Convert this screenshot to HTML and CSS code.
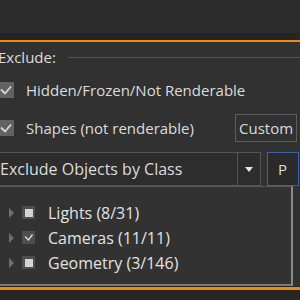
FILE: index.html
```html
<!DOCTYPE html>
<html>

<head>
    <title>Exclude</title>
    <meta charset="UTF-8">
    <link rel="stylesheet" href="styles.css">
</head>

<body>
    <div class="toolbar"></div>
    <div class="toolbar-edge"></div>
    <div class="accent"></div>

    <div class="panel">
        <div class="group-head">
            <span class="group-title">Exclude:</span>
            <span class="group-rule"></span>
        </div>

        <div class="check-row">
            <span class="check-box"><svg width="16" height="16" viewBox="0 0 16 16"><path d="M3 7.5 L7 11.5 L13 4.5" fill="none" stroke="#d6d6d6" stroke-width="1.8"/></svg></span>
            <span class="check-label">Hidden/Frozen/Not Renderable</span>
        </div>

        <div class="check-row second">
            <span class="check-box"><svg width="16" height="16" viewBox="0 0 16 16"><path d="M3 7.5 L7 11.5 L13 4.5" fill="none" stroke="#d6d6d6" stroke-width="1.8"/></svg></span>
            <span class="check-label">Shapes (not renderable)</span>
            <span class="custom-box">Custom</span>
        </div>

        <div class="combo-row">
            <div class="combo">
                <span class="combo-text">Exclude Objects by Class</span>
                <span class="combo-arrow"><svg width="8" height="5" viewBox="0 0 8 5"><path d="M0 0 L8 0 L4 5 Z" fill="#e6e6e6"/></svg></span>
            </div>
            <div class="pick-btn">P</div>
        </div>

        <div class="tree">
            <div class="tree-item">
                <span class="expander"></span>
                <span class="tree-check partial"></span>
                <span class="tree-label">Lights (8/31)</span>
            </div>
            <div class="tree-item">
                <span class="expander"></span>
                <span class="tree-check"><svg width="13" height="13" viewBox="0 0 13 13"><path d="M3 5.5 L6.5 9 L10.5 3.5" fill="none" stroke="#dcdcdc" stroke-width="1.3"/></svg></span>
                <span class="tree-label">Cameras (11/11)</span>
            </div>
            <div class="tree-item">
                <span class="expander"></span>
                <span class="tree-check partial"></span>
                <span class="tree-label">Geometry (3/146)</span>
            </div>
        </div>
    </div>

    <div class="accent bottom"></div>
</body>

</html>
```

FILE: styles.css
```css
body {
    margin: 0;
    width: 300px;
    height: 300px;
    overflow: hidden;
    background-color: #262626;
    font-family: "Open Sans", "Noto Sans", sans-serif;
    font-size: 15px;
    color: #dcdcdc;
}

.toolbar {
    height: 33px;
    background-color: #2c2c2c;
}

.toolbar-edge {
    height: 7px;
    background-color: #252525;
}

.accent {
    height: 2px;
    background-color: #f2880a;
}

.accent.bottom {
    height: 3px;
    margin-top: 1px;
}

.panel {
    background-color: #313131;
    padding-top: 7px;
    margin-left: -2px;
    height: 244px;
    box-sizing: border-box;
    display: flex;
    flex-direction: column;
}

.group-head {
    display: flex;
    align-items: center;
    height: 16px;
}

.group-title {
    line-height: 16px;
}

.group-rule {
    flex: 1;
    height: 1px;
    margin-left: 12px;
    background-color: #565656;
}

.check-row {
    display: flex;
    align-items: center;
    height: 16px;
    margin-top: 17px;
}

.check-row.second {
    margin-top: 22px;
}

.check-box {
    width: 16px;
    height: 16px;
    background-color: #626262;
}

.check-label {
    margin-left: 12px;
}

.custom-box {
    margin-left: auto;
    width: 62px;
    height: 28px;
    box-sizing: border-box;
    border: 1px solid #5c5c5c;
    padding-left: 3px;
    line-height: 26px;
    margin-right: 3px;
}

.combo-row {
    display: flex;
    margin-top: 16px;
    height: 34px;
}

.combo {
    width: 263px;
    display: flex;
    border: 1px solid #555555;
    box-sizing: border-box;
    background-color: #2d2d2d;
}

.combo-text {
    flex: 1;
    font-size: 16px;
    line-height: 32px;
    padding-left: 1px;
}

.combo-arrow {
    width: 22px;
    border-left: 1px solid #555555;
    display: flex;
    align-items: center;
    justify-content: center;
}

.pick-btn {
    width: 32px;
    margin-left: 6px;
    box-sizing: border-box;
    border: 1px solid #3c62ad;
    background-color: #2a2a2a;
    line-height: 32px;
    padding-left: 10px;
}

.tree {
    width: 295px;
    flex: 1;
    box-sizing: border-box;
    border: 1px solid #5a5a5a;
    border-right: 2px solid #8a8a8a;
    border-bottom: 2px solid #7a7a7a;
    background-color: #323232;
    padding-top: 13px;
    padding-left: 9px;
}

.tree-item {
    display: flex;
    align-items: center;
    height: 25px;
}

.expander {
    width: 0;
    height: 0;
    border-top: 5px solid transparent;
    border-bottom: 5px solid transparent;
    border-left: 5px solid #6e6e6e;
    margin-left: 1px;
}

.tree-check {
    width: 13px;
    height: 13px;
    margin-left: 8px;
    background-color: #4e4e4e;
    display: flex;
    align-items: center;
    justify-content: center;
}

.tree-check.partial::after {
    content: "";
    width: 8px;
    height: 8px;
    background-color: #d4d4d4;
}

.tree-label {
    margin-left: 13px;
    font-size: 16px;
    color: #e2e2e2;
}
```
